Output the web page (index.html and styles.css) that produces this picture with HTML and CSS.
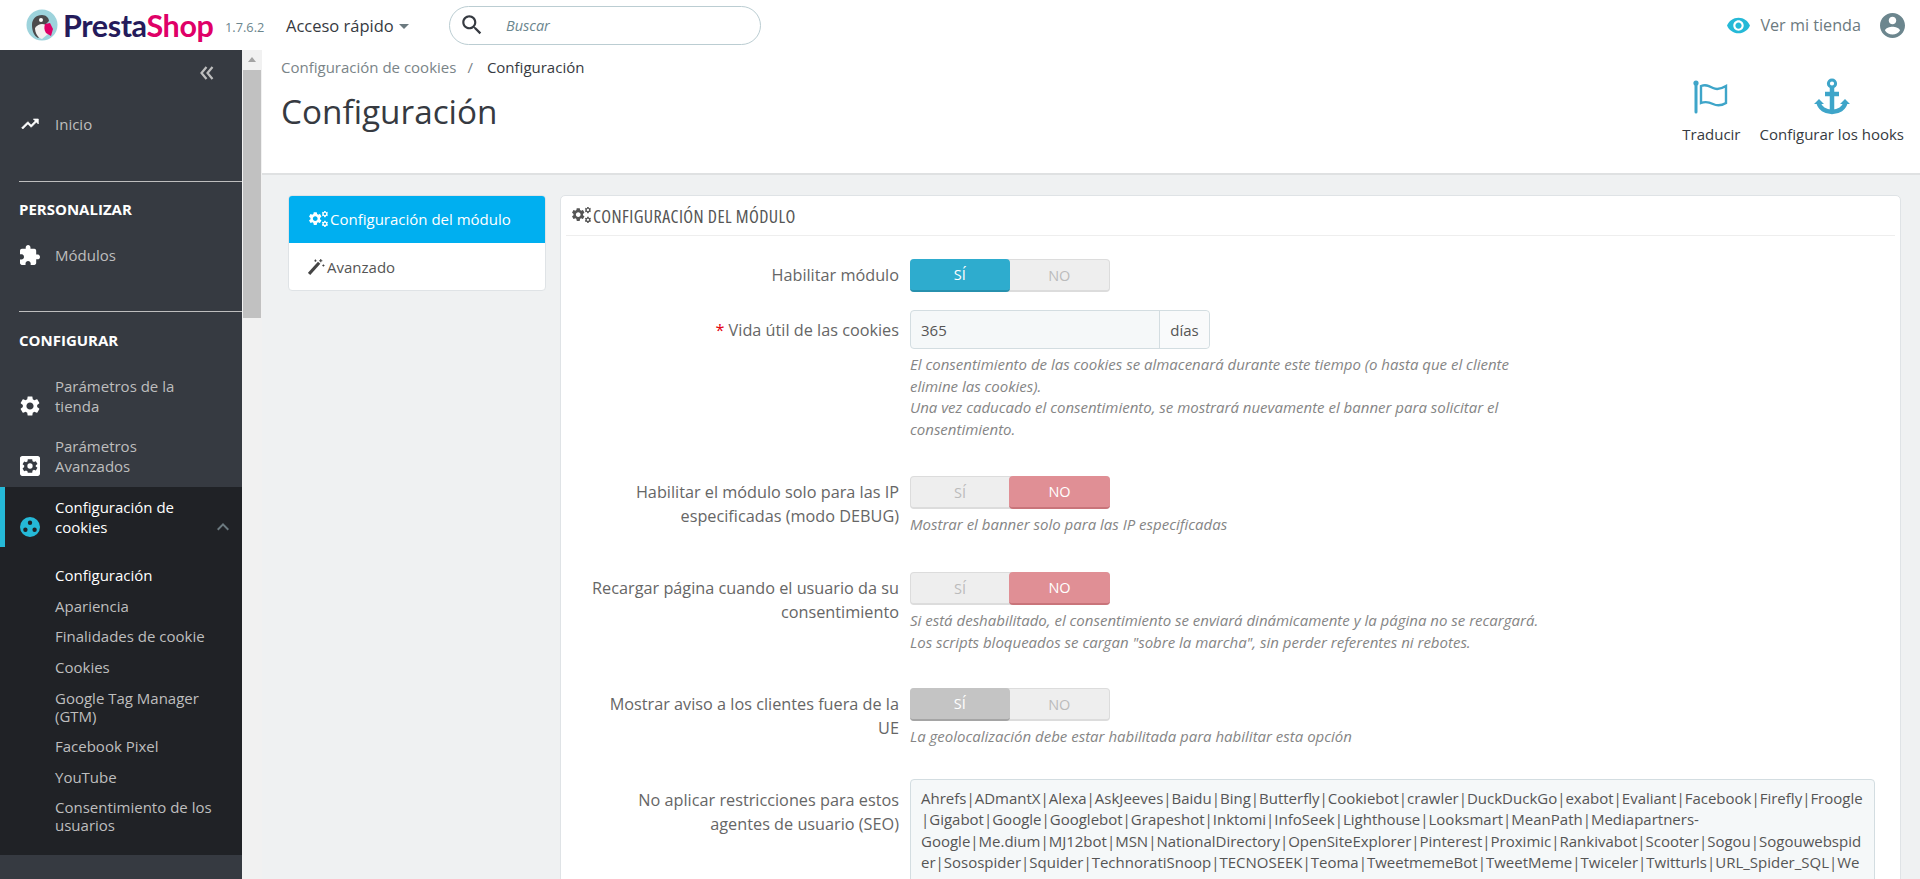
FILE: index.html
```html
<!DOCTYPE html>
<html lang="es">
<head>
<meta charset="utf-8">
<title>Configuración</title>
<link rel="stylesheet" href="styles.css">
</head>
<body>
<header class="topbar">
  <div class="logo">
    <svg class="logo-mark" viewBox="0 0 32 32"><circle cx="16" cy="16" r="15.500" fill="#9dd3dc"/><path d="M6 16c0-6 4-10 10-10 4 0 7 3 7 6l-3 3c-1 3-2 5-2 9l-6 5c-4-2-6-7-6-13z" fill="#4b4a4c"/><path d="M9 19c3-4 7-5 11-3l2 9-6 5c-4-1-7-6-7-11z" fill="#f3f1f0"/><path d="M19 15l5-1 3 6-2 7-5-3c-2-3-2-6-1-9z" fill="#df0067"/><circle cx="15" cy="11" r="2" fill="#fff"/></svg>
    <span class="logo-word"><span class="logo-a">Presta</span><span class="logo-b">Shop</span></span>
  </div>
  <span class="version">1.7.6.2</span>
  <span class="quick">Acceso rápido<i class="caret"></i></span>
  <div class="search">
    <svg class="search-ico" viewBox="0 0 24 24"><path d="M15.500 14h-.79l-.28-.27C15.410 12.590 16 11.110 16 9.500 16 5.910 13.090 3 9.500 3S3 5.910 3 9.500 5.910 16 9.500 16c1.610 0 3.090-.59 4.230-1.570l.27.28v.79l5 4.990L20.490 19l-4.990-5zm-6 0C7.010 14 5 11.990 5 9.500S7.010 5 9.500 5 14 7.010 14 9.500 11.990 14 9.500 14z"/></svg>
    <span class="search-ph">Buscar</span>
  </div>
  <div class="top-right">
    <svg class="eye" viewBox="0 0 24 24"><path d="M12 4.500C7 4.500 2.730 7.610 1 12c1.730 4.390 6 7.500 11 7.500s9.270-3.110 11-7.500c-1.730-4.390-6-7.500-11-7.500zM12 17c-2.760 0-5-2.240-5-5s2.240-5 5-5 5 2.240 5 5-2.240 5-5 5zm0-8c-1.660 0-3 1.340-3 3s1.340 3 3 3 3-1.340 3-3-1.340-3-3-3z"/></svg>
    <span class="view-shop">Ver mi tienda</span>
    <svg class="account" viewBox="2 2 20 20"><path d="M12 2C6.480 2 2 6.480 2 12s4.480 10 10 10 10-4.480 10-10S17.520 2 12 2zm0 3c1.660 0 3 1.340 3 3s-1.340 3-3 3-3-1.340-3-3 1.340-3 3-3zm0 14.200c-2.500 0-4.710-1.280-6-3.220.03-1.990 4-3.080 6-3.080 1.990 0 5.970 1.090 6 3.080-1.290 1.940-3.500 3.220-6 3.220z"/></svg>
  </div>
</header>

<div class="shell">
  <nav class="sidebar">
    <div class="collapse"><svg viewBox="0 0 16 14"><path d="M7.500 1L2.500 7l5 6M13.500 1L8.500 7l5 6"/></svg></div>
    <a class="item item-inicio"><svg class="ico ico-bold" viewBox="0 0 24 24"><path d="M16 6l2.290 2.290-4.880 4.880-4-4L2 16.590 3.410 18l6-6 4 4 6.300-6.290L22 12V6z"/></svg><span>Inicio</span></a>
    <hr class="rule">
    <h4 class="section">PERSONALIZAR</h4>
    <a class="item item-mod"><svg class="ico" viewBox="2 1 21 21"><path d="M20.500 11H19V7c0-1.100-.9-2-2-2h-4V3.500C13 2.120 11.880 1 10.500 1S8 2.120 8 3.500V5H4c-1.100 0-1.990.9-1.990 2v3.800H3.500c1.490 0 2.700 1.210 2.700 2.700s-1.210 2.700-2.700 2.700H2V20c0 1.100.9 2 2 2h3.800v-1.500c0-1.490 1.210-2.700 2.700-2.700 1.490 0 2.700 1.210 2.700 2.700V22H17c1.100 0 2-.9 2-2v-4h1.500c1.380 0 2.500-1.120 2.500-2.500S21.880 11 20.500 11z"/></svg><span>Módulos</span></a>
    <hr class="rule rule-2">
    <h4 class="section">CONFIGURAR</h4>
    <a class="item item-two"><svg class="ico" viewBox="2 2 20 20"><path d="M19.140 12.940c.04-.3.06-.61.06-.94 0-.32-.02-.64-.07-.94l2.030-1.580c.18-.14.230-.41.120-.61l-1.920-3.320c-.12-.22-.37-.29-.59-.22l-2.390.96c-.5-.38-1.030-.7-1.620-.94l-.36-2.540c-.04-.24-.24-.41-.48-.41h-3.840c-.24 0-.43.170-.47.41l-.36 2.540c-.59.24-1.130.57-1.620.94l-2.390-.96c-.22-.08-.47 0-.59.22L2.740 8.870c-.12.21-.08.47.12.61l2.030 1.580c-.05.3-.09.63-.09.94s.02.64.07.94l-2.030 1.580c-.18.140-.23.410-.12.610l1.920 3.320c.12.220.37.290.59.220l2.390-.96c.5.38 1.030.7 1.620.94l.36 2.540c.05.24.24.41.48.41h3.840c.24 0 .44-.17.47-.41l.36-2.540c.59-.24 1.130-.56 1.620-.94l2.390.96c.22.08.47 0 .59-.22l1.920-3.320c.12-.22.07-.47-.12-.61l-2.010-1.580zM12 15.600c-1.980 0-3.600-1.620-3.600-3.600s1.620-3.600 3.600-3.600 3.600 1.620 3.600 3.600-1.620 3.600-3.600 3.600z"/></svg><span>Parámetros de la tienda</span></a>
    <a class="item item-two"><svg class="ico" viewBox="3 3 18 18"><path fill-rule="evenodd" d="M5 3h14c1.100 0 2 .9 2 2v14c0 1.100-.9 2-2 2H5c-1.100 0-2-.9-2-2V5c0-1.100.9-2 2-2zm12.200 9.700c.03-.22.05-.45.05-.7 0-.24-.02-.47-.05-.7l1.500-1.170-1.450-2.500-1.770.7c-.37-.28-.76-.52-1.200-.7L14 6h-4l-.27 1.930c-.44.18-.84.42-1.200.7l-1.770-.7-1.450 2.500 1.500 1.170c-.03.23-.06.47-.06.7s.02.47.05.7l-1.500 1.170 1.450 2.500 1.770-.7c.37.28.76.52 1.200.7L10 18h4l.27-1.930c.44-.18.84-.42 1.200-.7l1.770.7 1.450-2.500-1.490-1.170zM12 14.400a2.400 2.400 0 1 1 0-4.800 2.400 2.400 0 0 1 0 4.800z"/></svg><span>Parámetros Avanzados</span></a>
    <div class="active-group">
      <a class="item item-active"><svg class="ico ico-cookie" viewBox="0 0 20 20"><path fill-rule="evenodd" d="M10 0a10 10 0 1 1 0 20 10 10 0 0 1 0-20zm0 3.600a2.200 2.200 0 1 0 0 4.400 2.200 2.200 0 0 0 0-4.400zM5.400 10.600a2.200 2.200 0 1 0 0 4.400 2.200 2.200 0 0 0 0-4.400zm9.200 0a2.200 2.200 0 1 0 0 4.400 2.200 2.200 0 0 0 0-4.400z"/></svg><span>Configuración de cookies</span><svg class="arrow" viewBox="6 8 12 8"><path d="M7.410 15.410L12 10.830l4.590 4.580L18 14l-6-6-6 6z"/></svg></a>
      <ul class="sub">
        <li class="sub-on">Configuración</li>
        <li>Apariencia</li>
        <li>Finalidades de cookie</li>
        <li>Cookies</li>
        <li>Google Tag Manager (GTM)</li>
        <li>Facebook Pixel</li>
        <li>YouTube</li>
        <li>Consentimiento de los usuarios</li>
      </ul>
    </div>
  </nav>
  <div class="scrollbar"><i class="scroll-up"></i><i class="scroll-thumb"></i></div>
  <main class="content">
    <section class="head">
      <div class="head-left">
        <div class="crumbs"><span class="crumb">Configuración de cookies</span><span class="sep">/</span><span class="crumb-on">Configuración</span></div>
        <h1>Configuración</h1>
      </div>
      <div class="toolbar">
        <a class="tool"><svg viewBox="0 0 36 36" class="tool-ico"><path d="M3 6v27" stroke-width="3" stroke-linecap="round"/><circle cx="3" cy="4" r="2.600" class="solid"/><path d="M8 7c5-2 8 0 12 2s8 1 13-2v17c-5 3-9 3-13 1s-7-3-12-1z" stroke-width="2.400"/></svg><span>Traducir</span></a>
        <a class="tool"><svg viewBox="0 0 36 36" class="tool-ico"><circle cx="18" cy="4.500" r="3.600" stroke-width="3"/><path d="M18 8v26" stroke-width="4.500"/><path d="M11 15h14" stroke-width="4.500"/><path d="M4.500 23c1 6.500 7 10 13.500 10s12.500-3.500 13.500-10" stroke-width="4.500"/><path d="M0 25l5-5 5 5zM26 25l5-5 5 5z" class="solid"/></svg><span>Configurar los hooks</span></a>
      </div>
    </section>
    <section class="body">
      <aside class="tabs">
        <a class="tab tab-on"><svg class="gears" viewBox="0 0 24 20"><use href="#gearset"/></svg>Configuración del módulo</a>
        <a class="tab"><svg class="wand" viewBox="0 0 16 16"><path d="M1 15L10.500 4.500" stroke-width="3"/><path d="M12 1v3M10.500 2.500h3M14.500 6v2M13.500 7h2M7 1.500v2M6 2.500h2" stroke-width="1"/></svg>Avanzado</a>
      </aside>
      <div class="panel">
        <div class="panel-head"><svg class="gears" viewBox="0 0 24 20"><defs><g id="gearset"><path transform="translate(-1.200 -.500) scale(.78)" d="M19.140 12.940c.04-.3.06-.61.06-.94 0-.32-.02-.64-.07-.94l2.030-1.580c.18-.14.230-.41.120-.61l-1.920-3.320c-.12-.22-.37-.29-.59-.22l-2.390.96c-.5-.38-1.030-.7-1.620-.94l-.36-2.540c-.04-.24-.24-.41-.48-.41h-3.840c-.24 0-.43.170-.47.41l-.36 2.540c-.59.24-1.130.57-1.620.94l-2.390-.96c-.22-.08-.47 0-.59.22L2.740 8.870c-.12.21-.08.47.12.61l2.030 1.580c-.05.3-.09.63-.09.94s.02.64.07.94l-2.030 1.580c-.18.140-.23.410-.12.610l1.920 3.320c.12.220.37.290.59.220l2.390-.96c.5.38 1.030.7 1.620.94l.36 2.540c.05.24.24.41.48.41h3.840c.24 0 .44-.17.47-.41l.36-2.540c.59-.24 1.130-.56 1.620-.94l2.390.96c.22.08.47 0 .59-.22l1.920-3.320c.12-.22.07-.47-.12-.61l-2.010-1.580zM12 15.600c-1.980 0-3.600-1.620-3.600-3.600s1.620-3.600 3.600-3.600 3.600 1.620 3.600 3.600-1.620 3.600-3.600 3.600z" fill-rule="evenodd"/><path transform="translate(15 -1) scale(.38)" d="M19.140 12.940c.04-.3.06-.61.06-.94 0-.32-.02-.64-.07-.94l2.030-1.580c.18-.14.230-.41.120-.61l-1.920-3.320c-.12-.22-.37-.29-.59-.22l-2.390.96c-.5-.38-1.030-.7-1.620-.94l-.36-2.540c-.04-.24-.24-.41-.48-.41h-3.840c-.24 0-.43.170-.47.41l-.36 2.540c-.59.24-1.130.57-1.620.94l-2.390-.96c-.22-.08-.47 0-.59.22L2.740 8.870c-.12.21-.08.47.12.61l2.030 1.580c-.05.3-.09.63-.09.94s.02.64.07.94l-2.030 1.580c-.18.140-.23.410-.12.610l1.920 3.320c.12.220.37.290.59.220l2.390-.96c.5.38 1.030.7 1.620.94l.36 2.540c.05.24.24.41.48.41h3.840c.24 0 .44-.17.47-.41l.36-2.540c.59-.24 1.130-.56 1.620-.94l2.390.96c.22.08.47 0 .59-.22l1.920-3.320c.12-.22.07-.47-.12-.61l-2.010-1.580zM12 15.600c-1.980 0-3.600-1.620-3.600-3.600s1.620-3.600 3.600-3.600 3.600 1.620 3.600 3.600-1.620 3.600-3.600 3.600z"/><path transform="translate(15 10.500) scale(.38)" d="M19.140 12.940c.04-.3.06-.61.06-.94 0-.32-.02-.64-.07-.94l2.030-1.580c.18-.14.230-.41.120-.61l-1.920-3.320c-.12-.22-.37-.29-.59-.22l-2.390.96c-.5-.38-1.030-.7-1.620-.94l-.36-2.540c-.04-.24-.24-.41-.48-.41h-3.840c-.24 0-.43.170-.47.41l-.36 2.540c-.59.24-1.130.57-1.620.94l-2.390-.96c-.22-.08-.47 0-.59.22L2.740 8.870c-.12.21-.08.47.12.61l2.030 1.580c-.05.3-.09.63-.09.94s.02.64.07.94l-2.030 1.580c-.18.140-.23.410-.12.610l1.920 3.320c.12.220.37.290.59.220l2.390-.96c.5.38 1.030.7 1.620.94l.36 2.540c.05.24.24.41.48.41h3.840c.24 0 .44-.17.47-.41l.36-2.540c.59-.24 1.130-.56 1.620-.94l2.390.96c.22.08.47 0 .59-.22l1.920-3.320c.12-.22.07-.47-.12-.61l-2.010-1.580zM12 15.600c-1.980 0-3.600-1.620-3.600-3.600s1.620-3.600 3.600-3.600 3.600 1.620 3.600 3.600-1.620 3.600-3.600 3.600z"/></g></defs><use href="#gearset"/></svg><span>CONFIGURACIÓN DEL MÓDULO</span></div>
        <div class="rows">
          <div class="row r1">
            <label>Habilitar módulo</label>
            <div class="ctl"><div class="switch"><span class="on-blue">SÍ</span><span>NO</span></div></div>
          </div>
          <div class="row r2">
            <label><b>*</b> Vida útil de las cookies</label>
            <div class="ctl">
              <div class="input-group"><span class="input">365</span><span class="addon">días</span></div>
              <p class="help">El consentimiento de las cookies se almacenará durante este tiempo (o hasta que el cliente<br>elimine las cookies).<br>Una vez caducado el consentimiento, se mostrará nuevamente el banner para solicitar el<br>consentimiento.</p>
            </div>
          </div>
          <div class="row r3">
            <label>Habilitar el módulo solo para las IP especificadas (modo DEBUG)</label>
            <div class="ctl"><div class="switch"><span>SÍ</span><span class="on-red">NO</span></div><p class="help">Mostrar el banner solo para las IP especificadas</p></div>
          </div>
          <div class="row r4">
            <label>Recargar página cuando el usuario da su consentimiento</label>
            <div class="ctl"><div class="switch"><span>SÍ</span><span class="on-red">NO</span></div><p class="help">Si está deshabilitado, el consentimiento se enviará dinámicamente y la página no se recargará.<br>Los scripts bloqueados se cargan "sobre la marcha", sin perder referentes ni rebotes.</p></div>
          </div>
          <div class="row r5">
            <label>Mostrar aviso a los clientes fuera de la UE</label>
            <div class="ctl"><div class="switch"><span class="on-grey">SÍ</span><span>NO</span></div><p class="help">La geolocalización debe estar habilitada para habilitar esta opción</p></div>
          </div>
          <div class="row r6">
            <label>No aplicar restricciones para estos agentes de usuario (SEO)</label>
            <div class="ctl"><div class="area">Ahrefs|ADmantX|Alexa|AskJeeves|Baidu|Bing|Butterfly|Cookiebot|crawler|DuckDuckGo|exabot|Evaliant|Facebook|Firefly|Froogle|Gigabot|Google|Googlebot|Grapeshot|Inktomi|InfoSeek|Lighthouse|Looksmart|MeanPath|Mediapartners-Google|Me.dium|MJ12bot|MSN|NationalDirectory|OpenSiteExplorer|Pinterest|Proximic|Rankivabot|Scooter|Sogou|Sogouwebspider|Sosospider|Squider|TechnoratiSnoop|TECNOSEEK|Teoma|TweetmemeBot|TweetMeme|Twiceler|Twitturls|URL_Spider_SQL|WebAltaCrawler|WebFindBot|www.galaxy.com|WebWombat|WiseNutWebBot</div></div>
          </div>
        </div>
      </div>
    </section>
  </main>
</div>
</body>
</html>
```
FILE: styles.css
```css
* { box-sizing: border-box; }
html, body { margin: 0; height: 100%; overflow: hidden; }
body { font-family: "Open Sans", sans-serif; font-size: 15px; color: #363a41; background: #eff1f2; }
a { display: block; }

.topbar { height: 50px; background: #fff; display: flex; align-items: center; position: relative; }
.logo { display: flex; align-items: center; margin-left: 26px; width: 199px; }
.logo-mark { width: 32px; height: 32px; flex: none; }
.logo-word { font-family: Lato, sans-serif; font-weight: 700; font-size: 30.500px; line-height: 1; margin-left: 5px; letter-spacing: -.4px; }
.logo-a { color: #251b5b; }
.logo-b { color: #df0067; }
.version { font-size: 12.800px; color: #6c868e; width: 61px; padding-top: 3px; }
.quick { font-size: 16.500px; color: #363a41; width: 163px; display: flex; align-items: center; }
.caret { width: 0; height: 0; border: 5px solid transparent; border-top: 5px solid #6c7a80; border-bottom: 0; margin-left: 5px; margin-top: 2px; }
.search { width: 312px; height: 39px; border: 1px solid #bbcdd2; border-radius: 20px; display: flex; align-items: center; padding-left: 9px; }
.search-ico { width: 26px; height: 26px; fill: #363a41; }
.search-ph { font-style: italic; color: #6c868e; font-size: 14.500px; margin-left: 21px; }
.top-right { margin-left: auto; display: flex; align-items: center; padding-right: 15px; }
.eye { width: 25px; height: 25px; fill: #25b9d7; }
.view-shop { font-size: 16.200px; color: #6c7a80; margin-left: 9px; }
.account { width: 25px; height: 25px; fill: #6c868e; margin-left: 19px; }

.shell { display: flex; height: 829px; }
.sidebar { width: 242px; flex: none; background: #363a41; color: #bebebe; }
.collapse { height: 48px; padding: 16px 0 0 199px; }
.collapse svg { width: 16px; height: 14px; display: block; fill: none; stroke: #bebebe; stroke-width: 2.200; }
.item { display: flex; align-items: flex-end; color: #bebebe; padding-left: 20px; line-height: 20px; }
.item span { margin-left: 15px; }
.ico { width: 20px; height: 20px; fill: #fff; flex: none; }
.ico-bold { stroke: #fff; stroke-width: .8; }
.item-inicio { margin-top: 16px; align-items: center; }
.rule { margin: 47px 0 0 19px; border: 0; border-top: 1px solid #bebebe; height: 1px; }
.rule-2 { margin-top: 46px; }
.section { margin: 17px 0 0 19px; color: #fff; font-size: 15px; font-weight: 700; line-height: 20px; }
.item-mod { margin-top: 26px; align-items: center; }
.rule-2 + .section { margin-top: 18px; }
.item-two { height: 40px; }
.section + .item-two { margin-top: 26px; }
.item-two + .item-two { margin-top: 20px; margin-bottom: 11px; }
.item-two span { width: 140px; }
.active-group { background: #202226; height: 368px; }
.item-active { height: 60px; padding: 0 0 10px 15px; border-left: 5px solid #25b9d7; color: #fff; position: relative; }
.item-active span { width: 140px; }
.ico-cookie { fill: #25b9d7; }
.arrow { position: absolute; left: 212px; top: 36px; width: 12px; height: 8px; fill: #6c7a80; }
.sub { list-style: none; margin: 0; padding: 13px 15px 0 55px; color: #bebebe; line-height: 18px; }
.sub li { padding: 6.300px 0; }
.sub-on { color: #fff; }

.scrollbar { width: 20px; flex: none; background: #f1f1f1; position: relative; padding: 0 1px; }
.scroll-up { display: block; width: 0; height: 0; margin: 7px auto 0; border: 4px solid transparent; border-bottom: 5px solid #a3a3a3; border-top: 0; }
.scroll-thumb { display: block; height: 248px; margin-top: 8px; background: #c1c1c1; }

.content { flex: 1; min-width: 0; display: flex; flex-direction: column; }
.head { height: 125px; background: #fff; border-bottom: 2px solid #dfe1e2; display: flex; justify-content: space-between; padding: 7px 16px 0 19px; }
.crumbs { font-size: 15px; line-height: 20px; }
.crumb { color: #7a8488; }
.sep { color: #7a8488; margin: 0 14px 0 11px; }
.crumb-on { color: #363a41; }
h1 { margin: 12px 0 0; font-size: 33.300px; font-weight: 400; line-height: 44px; color: #363a41; }
.toolbar { display: flex; gap: 19px; padding-top: 22px; align-items: flex-start; }
.tool { display: flex; flex-direction: column; align-items: center; color: #363a41; }
.tool-ico { width: 36px; height: 36px; fill: none; stroke: #3ea5c9; overflow: visible; }
.tool-ico .solid { fill: #3ea5c9; stroke: none; }
.tool span { margin-top: 9px; line-height: 20px; }

.body { flex: 1; display: flex; align-items: flex-start; padding: 20px 19px 0 26px; gap: 14px; min-height: 0; }
.tabs { width: 258px; flex: none; background: #fff; border: 1px solid #dfe3e6; border-radius: 4px; overflow: hidden; }
.tab { height: 47px; display: flex; align-items: center; padding-left: 19px; color: #555; }
.tab-on { background: #00aff0; color: #fff; height: 48px; margin: -1px -1px 0; padding-left: 20px; fill: #fff; }
.gears { width: 21px; height: 17px; fill: currentColor; margin-right: 1px; flex: none; }
.wand { width: 17px; height: 17px; fill: none; stroke: #444; margin-right: 2px; flex: none; }
.panel { flex: 1; min-width: 0; background: #fff; border: 1px solid #dfe3e6; border-radius: 5px 5px 0 0; height: 800px; padding: 0 5px; }
.panel-head { height: 40px; display: flex; align-items: center; border-bottom: 1px solid #eee; padding-left: 5px; color: #555; }
.panel-head span { font-family: "Open Sans", sans-serif; font-stretch: 75%; font-size: 18px; letter-spacing: .4px; }
.panel-head .gears { color: #555; }
.rows { padding-top: 23px; }
.row { display: grid; grid-template-columns: 334px 1fr; column-gap: 10px; }
.row label { text-align: right; color: #666; font-size: 16.250px; line-height: 23.500px; padding: 5px 1px 0 23px; }
.row label b { color: #e3000f; font-weight: 400; }
.r1 { height: 51px; }
.r2 { height: 166px; }
.r2 label { padding-top: 9px; }
.r3 { height: 96px; }
.r4 { height: 116px; }
.r5 { height: 91px; }
.r6 label { padding-top: 10px; }
.switch { width: 200px; height: 33px; display: flex; background: #eee; border: 1px solid #dcdcdc; border-bottom-width: 2px; border-radius: 4px; }
.switch span { flex: 1; display: flex; align-items: center; justify-content: center; color: #bbb; font-size: 14.500px; margin: -1px 0 -2px; }
.switch .on-blue { background: #2eacce; color: #fff; border-radius: 4px; border-bottom: 2px solid #2791ae; margin-left: -1px; }
.switch .on-red { background: #e08f95; color: #fff; border-radius: 4px; border-bottom: 2px solid #c9747a; margin-right: -1px; flex: 0 0 101px; }
.switch .on-grey { background: #c4c4c4; color: #fff; border-radius: 4px; border-bottom: 2px solid #a5a5a5; margin-left: -1px; }
.input-group { display: flex; width: 300px; height: 39px; border: 1px solid #d3dde1; border-radius: 4px; background: #f5f8f9; }
.input { width: 249px; padding: 1px 10px 0; line-height: 37px; color: #555; border-right: 1px solid #d3dde1; }
.addon { flex: 1; text-align: center; line-height: 37px; padding-top: 1px; color: #555; background: #f9fafb; border-radius: 0 4px 4px 0; }
.help { margin: 5px 0 0; color: #858585; font-style: italic; font-size: 15px; line-height: 21.700px; }
.area { width: 965px; height: 300px; border: 1px solid #d3dde1; border-radius: 4px; background: #f5f8f9; padding: 8px 10px 0; line-height: 21.400px; font-size: 15px; color: #555; overflow-wrap: anywhere; }
```
